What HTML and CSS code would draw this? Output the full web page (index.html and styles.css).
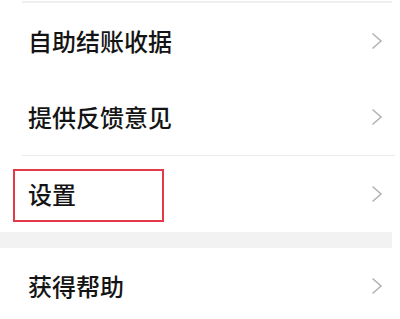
FILE: index.html
```html
<!DOCTYPE html>
<html lang="zh-CN">
<head>
<meta charset="utf-8">
<link rel="stylesheet" href="styles.css">
</head>
<body>
<div class="page">
  <div class="top-line"></div>
  <div class="row">
    <span class="label">自助结账收据</span>
    <svg class="chev" viewBox="0 0 12 18"><polyline points="1.5,1.5 10,9 1.5,16.5"/></svg>
  </div>
  <div class="row">
    <span class="label">提供反馈意见</span>
    <svg class="chev" viewBox="0 0 12 18"><polyline points="1.5,1.5 10,9 1.5,16.5"/></svg>
  </div>
  <div class="divider"></div>
  <div class="row row-marked">
    <span class="label">设置</span>
    <svg class="chev" viewBox="0 0 12 18"><polyline points="1.5,1.5 10,9 1.5,16.5"/></svg>
    <div class="highlight"></div>
  </div>
  <div class="band"></div>
  <div class="row">
    <span class="label">获得帮助</span>
    <svg class="chev" viewBox="0 0 12 18"><polyline points="1.5,1.5 10,9 1.5,16.5"/></svg>
  </div>
</div>
</body>
</html>
```

FILE: styles.css
```css
html, body {
  margin: 0;
  padding: 0;
  background: #ffffff;
}
.page {
  width: 400px;
  height: 319px;
  overflow: hidden;
  padding-top: 1px;
  box-sizing: border-box;
  font-family: "Noto Sans CJK SC", "Noto Sans", sans-serif;
}
.top-line {
  margin-left: 22px;
  width: 370px;
  height: 2px;
  background: #efefef;
}
.row {
  position: relative;
  height: 76px;
  display: flex;
  align-items: center;
  justify-content: space-between;
  padding: 0 17px 0 28px;
}
.label {
  font-size: 24px;
  font-weight: 500;
  color: #141414;
  line-height: 1;
}
.chev {
  width: 12px;
  height: 18px;
  fill: none;
  stroke: #b3b3b3;
  stroke-width: 1.6;
}
.divider {
  margin-left: 22px;
  width: 373px;
  height: 1px;
  background: #ececec;
}
.highlight {
  position: absolute;
  left: 13px;
  top: 13px;
  width: 147px;
  height: 49px;
  border: 2px solid #e23a48;
}
.band {
  width: 392px;
  height: 16px;
  background: #f2f2f2;
}
```
